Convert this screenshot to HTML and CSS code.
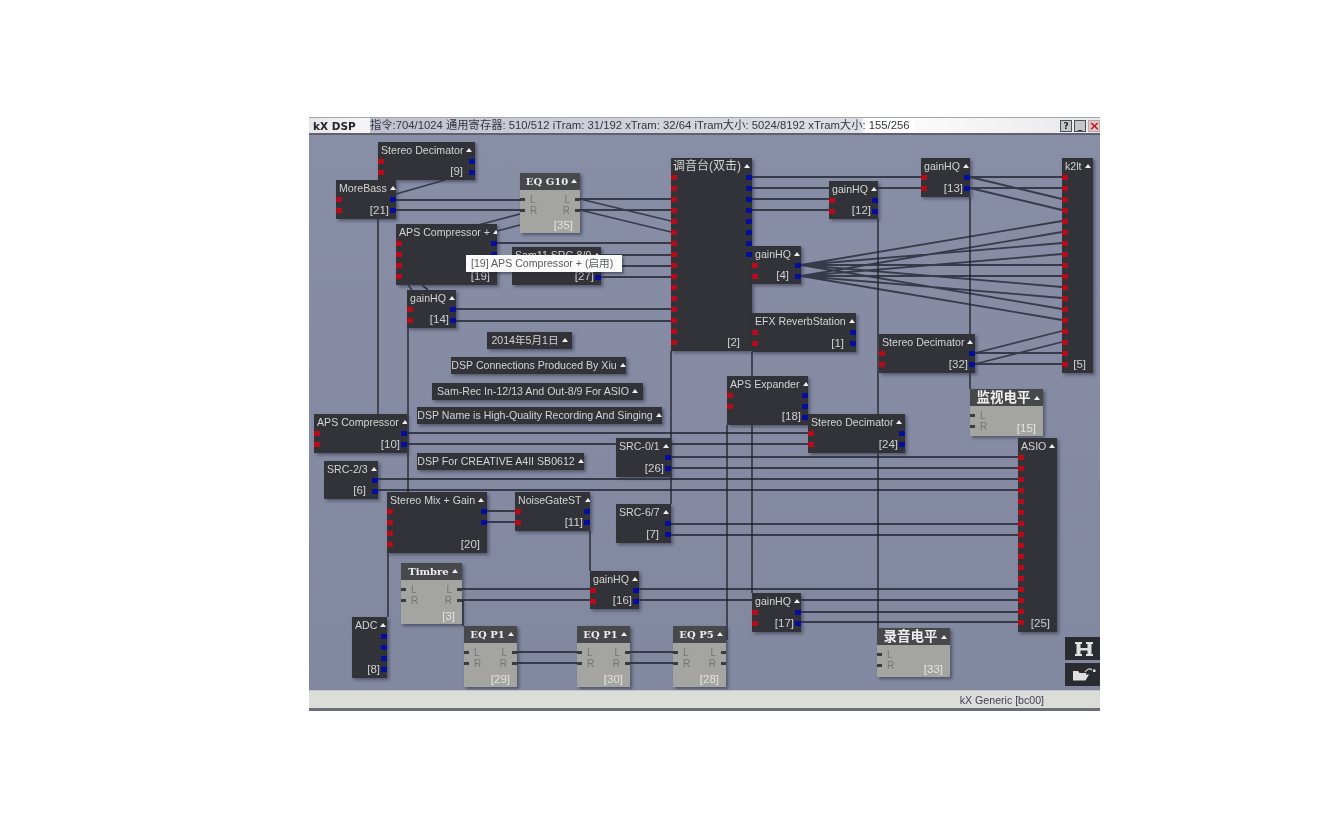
FILE: index.html
```html
<!DOCTYPE html>
<html lang="zh">
<head>
<meta charset="utf-8">
<title>kX DSP</title>
<link rel="stylesheet" href="styles.css">
</head>
<body>
<div class="win">
  <header class="titlebar">
    <b class="appname">kX DSP</b>
    <span class="stats">指令:704/1024 通用寄存器: 510/512 iTram: 31/192 xTram: 32/64 iTram大小: 5024/8192 xTram大小: 155/256</span>
    <span class="ctrls"><i class="c">?</i><i class="c">_</i><i class="c x">×</i></span>
  </header>
  <main class="canvas">
    <svg class="wires" viewBox="309 135 791 555">
      <path class="w" d="M396 200H520M396 210H520M580 199H671M580 210H671M580 199L671 221M580 210L671 232M478 225L520 214M497 231L520 225M396 194L445 180M497 243H671M601 255H671M601 266H671M601 277H671M456 309H671M456 321H671M407 433H808M407 444H808M671 457H1018M671 468H1018M378 479H1018M378 490H1018M671 524H1018M671 535H1018M462 589H590M462 600H590M639 589H1018M639 600H1018M801 612H1018M801 622H1018M487 511H515M487 522H515M517 652H577M517 663H577M630 652H673M630 663H673M752 177H921M752 188H921M752 199H829M752 210H829M970 177H1062M970 188H1062M970 177L1062 199M970 188L1062 210M801 265L1062 221M801 265L1062 243M801 265L1062 265M801 265L1062 287M801 265L1062 309M801 276L1062 232M801 276L1062 254M801 276L1062 276M801 276L1062 298M801 276L1062 320M975 353H1062M975 364H1062M975 353L1062 331M975 364L1062 342M408 285L412 290M422 285L428 290"/>
      <path class="v" d="M378 219V414M408 328V492M671 351V504M388 553V617M590 531V571M463 600V626M727 425V640M752 352V593M878 219V628M970 197V389"/>
    </svg>

    <section class="node n9"><h4>Stereo Decimator</h4><div class="b"><p class="ports"><i></i><i></i></p><p class="ports out"><i></i><i></i></p></div><span class="id far">[9]</span></section>
    <section class="node n21"><h4>MoreBass</h4><div class="b"><p class="ports"><i></i><i></i></p><p class="ports out"><i></i><i></i></p></div><span class="id">[21]</span></section>
    <section class="node grey n35"><h4>EQ G10</h4><div class="b"><p class="ports"><span><i></i>L</span><span><i></i>R</span></p><p class="ports out"><span><i></i>L</span><span><i></i>R</span></p></div><span class="id">[35]</span></section>
    <section class="node n19"><h4>APS Compressor +</h4><div class="b"><p class="ports"><i></i><i></i><i></i><i></i></p><p class="ports out"><i></i><i></i></p></div><span class="id">[19]</span></section>
    <section class="node n27"><h4>Sam11 SRC-8/9</h4><div class="b"><p class="ports"></p><p class="ports out"><i></i><i></i></p></div><span class="id">[27]</span></section>
    <section class="node n14"><h4>gainHQ</h4><div class="b"><p class="ports"><i></i><i></i></p><p class="ports out"><i></i><i></i></p></div><span class="id">[14]</span></section>
    <section class="node n2"><h4 class="cn">调音台(双击)</h4><div class="b"><p class="ports"><i></i><i></i><i></i><i></i><i></i><i></i><i></i><i></i><i></i><i></i><i></i><i></i><i></i><i></i><i></i><i></i></p><p class="ports out"><i></i><i></i><i></i><i></i><i></i><i></i><i></i><i></i></p></div><span class="id far">[2]</span></section>
    <section class="node n12"><h4>gainHQ</h4><div class="b"><p class="ports"><i></i><i></i></p><p class="ports out"><i></i><i></i></p></div><span class="id">[12]</span></section>
    <section class="node n13"><h4>gainHQ</h4><div class="b"><p class="ports"><i></i><i></i></p><p class="ports out"><i></i><i></i></p></div><span class="id">[13]</span></section>
    <section class="node n5"><h4>k2lt</h4><div class="b"><p class="ports"><i></i><i></i><i></i><i></i><i></i><i></i><i></i><i></i><i></i><i></i><i></i><i></i><i></i><i></i><i></i><i></i><i></i><i></i></p></div><span class="id">[5]</span></section>
    <section class="node n4"><h4>gainHQ</h4><div class="b"><p class="ports"><i></i><i></i></p><p class="ports out"><i></i><i></i></p></div><span class="id far">[4]</span></section>
    <section class="node n1"><h4>EFX ReverbStation</h4><div class="b"><p class="ports"><i></i><i></i></p><p class="ports out"><i></i><i></i></p></div><span class="id far">[1]</span></section>
    <section class="node n32"><h4>Stereo Decimator</h4><div class="b"><p class="ports"><i></i><i></i></p><p class="ports out"><i></i><i></i></p></div><span class="id">[32]</span></section>
    <section class="node n18"><h4>APS Expander</h4><div class="b"><p class="ports"><i></i><i></i></p><p class="ports out"><i></i><i></i><i></i></p></div><span class="id">[18]</span></section>
    <section class="node n24"><h4>Stereo Decimator</h4><div class="b"><p class="ports"><i></i><i></i></p><p class="ports out"><i></i><i></i></p></div><span class="id">[24]</span></section>
    <section class="node grey n15"><h4 class="cn">监视电平</h4><div class="b"><p class="ports"><span><i></i>L</span><span><i></i>R</span></p></div><span class="id">[15]</span></section>
    <section class="node n25"><h4>ASIO</h4><div class="b"><p class="ports"><i></i><i></i><i></i><i></i><i></i><i></i><i></i><i></i><i></i><i></i><i></i><i></i><i></i><i></i><i></i><i></i></p></div><span class="id">[25]</span></section>
    <section class="node n10"><h4>APS Compressor</h4><div class="b"><p class="ports"><i></i><i></i></p><p class="ports out"><i></i><i></i></p></div><span class="id">[10]</span></section>
    <section class="node n6"><h4>SRC-2/3</h4><div class="b"><p class="ports"></p><p class="ports out"><i></i><i></i></p></div><span class="id far">[6]</span></section>
    <section class="node n26"><h4>SRC-0/1</h4><div class="b"><p class="ports"></p><p class="ports out"><i></i><i></i></p></div><span class="id">[26]</span></section>

    <div class="note a"><h4>2014年5月1日</h4></div>
    <div class="note b1"><h4>DSP Connections Produced By Xiu</h4></div>
    <div class="note c1"><h4>Sam-Rec In-12/13 And Out-8/9 For ASIO</h4></div>
    <div class="note d"><h4>DSP Name is High-Quality Recording And Singing</h4></div>
    <div class="note e"><h4>DSP For CREATIVE A4II SB0612</h4></div>

    <section class="node n20"><h4>Stereo Mix + Gain</h4><div class="b"><p class="ports"><i></i><i></i><i></i><i></i></p><p class="ports out"><i></i><i></i></p></div><span class="id">[20]</span></section>
    <section class="node n11"><h4>NoiseGateST</h4><div class="b"><p class="ports"><i></i><i></i></p><p class="ports out"><i></i><i></i></p></div><span class="id">[11]</span></section>
    <section class="node n7"><h4>SRC-6/7</h4><div class="b"><p class="ports"></p><p class="ports out"><i></i><i></i></p></div><span class="id far">[7]</span></section>
    <section class="node grey n3"><h4>Timbre</h4><div class="b"><p class="ports"><span><i></i>L</span><span><i></i>R</span></p><p class="ports out"><span><i></i>L</span><span><i></i>R</span></p></div><span class="id">[3]</span></section>
    <section class="node n16"><h4>gainHQ</h4><div class="b"><p class="ports"><i></i><i></i></p><p class="ports out"><i></i><i></i></p></div><span class="id">[16]</span></section>
    <section class="node n17"><h4>gainHQ</h4><div class="b"><p class="ports"><i></i><i></i></p><p class="ports out"><i></i><i></i></p></div><span class="id">[17]</span></section>
    <section class="node n8"><h4>ADC</h4><div class="b"><p class="ports"></p><p class="ports out"><i></i><i></i><i></i><i></i></p></div><span class="id">[8]</span></section>
    <section class="node grey n29"><h4>EQ P1</h4><div class="b"><p class="ports"><span><i></i>L</span><span><i></i>R</span></p><p class="ports out"><span><i></i>L</span><span><i></i>R</span></p></div><span class="id">[29]</span></section>
    <section class="node grey n30"><h4>EQ P1</h4><div class="b"><p class="ports"><span><i></i>L</span><span><i></i>R</span></p><p class="ports out"><span><i></i>L</span><span><i></i>R</span></p></div><span class="id">[30]</span></section>
    <section class="node grey n28"><h4>EQ P5</h4><div class="b"><p class="ports"><span><i></i>L</span><span><i></i>R</span></p><p class="ports out"><span><i></i>L</span><span><i></i>R</span></p></div><span class="id">[28]</span></section>
    <section class="node grey n33"><h4 class="cn">录音电平</h4><div class="b"><p class="ports"><span><i></i>L</span><span><i></i>R</span></p></div><span class="id">[33]</span></section>

    <div class="tooltip">[19] APS Compressor + (启用)</div>

    <div class="tools">
      <button class="tool" aria-label="Save"><svg viewBox="0 0 35 23"><path class="ic" d="M10 5H17V7H15.500V11H22.500V7H21V5H28V7H26.500V17H28V19H21V17H22.500V13.500H15.500V17H17V19H10V17H11.500V7H10Z"/></svg></button>
      <button class="tool" aria-label="Open"><svg viewBox="0 0 35 23"><path class="ic" d="M8 8H13L14.500 10H21V11.500H24L20.500 17.500H8Z"/><path class="arr" d="M20 9Q24 4 27 7"/><path class="ic" d="M28 6.500H30.500V9H28Z"/></svg></button>
    </div>
  </main>
  <footer class="status"><span>kX Generic [bc00]</span></footer>
</div>
</body>
</html>
```

FILE: styles.css
```css
html, body { margin: 0; padding: 0; height: 100%; overflow: hidden; background: #fff; }
body { font-family: "Liberation Sans", "Noto Sans CJK SC", sans-serif; }

.win {
  width: 791px;
  height: 594px;
  margin: 117px 0 0 309px;
  display: flex;
  flex-direction: column;
  filter: blur(.6px);
  background: #6c6f7a;
}

.titlebar {
  height: 15px;
  flex: none;
  display: flex;
  align-items: center;
  background: linear-gradient(90deg, #e6e6e6 0, #f4f4f4 6%, #fff 72%, #e8e8ea 100%);
  border-top: 1px solid #a4a6ae;
  border-bottom: 2px solid #5f626d;
}
.appname {
  font: bold 10.5px "DejaVu Sans", sans-serif;
  color: #24242a;
  margin-left: 4px;
  width: 57px;
}
.stats {
  font-size: 11.3px;
  line-height: 15px;
  color: #33353f;
  white-space: nowrap;
  width: 545px;
  overflow: hidden;
  background: linear-gradient(90deg, #bfc2cd, #d2d4dc 55%, #dfe0e6 90%, #fff 91%);
}
.ctrls { margin-left: auto; display: flex; gap: 2px; }
.c {
  width: 12px;
  height: 12px;
  font: bold 9px/10px "DejaVu Sans", sans-serif;
  text-align: center;
  color: #222;
  background: #c4c6cc;
  border: 1.5px solid #4e5059;
  box-sizing: border-box;
}
.c.x { color: #c81420; border-color: #b9a4a8; background: #d9c8cc; font-size: 13px; }

.canvas {
  position: relative;
  flex: 1;
  background: linear-gradient(180deg, #898ea7, #82889f);
  overflow: hidden;
}
.wires { position: absolute; left: 0; top: 0; width: 791px; height: 555px; }
.w { fill: none; stroke: #363b4a; stroke-width: 1.8; }
.v { fill: none; stroke: #1c1f26; stroke-width: 1.3; }

.node, .note {
  position: absolute;
  background: #323338;
  box-shadow: 2px 2px 3px rgba(45, 50, 70, .55);
  color: #d4d4d4;
}
.node { display: flex; flex-direction: column; }
h4 {
  margin: 0;
  height: 17px;
  flex: none;
  padding-left: 3px;
  font-size: 10.6px;
  font-weight: 400;
  line-height: 17px;
  white-space: nowrap;
  overflow: hidden;
}
h4.cn { font-size: 12px; padding-left: 2px; }
h4::after {
  content: "";
  display: inline-block;
  margin-left: 3px;
  vertical-align: 2px;
  border-left: 3px solid transparent;
  border-right: 3px solid transparent;
  border-bottom: 4px solid #eee;
}
.b { display: flex; justify-content: space-between; flex: 1; }
.ports { margin: 0; display: flex; flex-direction: column; gap: 6px; padding-top: 0; margin-top: -.5px; }
.ports i { display: block; width: 6px; height: 5px; background: #b80a18; }
.ports.out i { background: #040d9e; }
.id { position: absolute; right: 7px; bottom: 2px; font-size: 11.5px; line-height: 14px; color: #d0d0d0; }
.id.far { right: 12px; }

.grey { background: #a4a5a1; box-shadow: 2px 2px 3px rgba(45, 50, 70, .6); }
.grey h4 { background: #47484b; color: #eee; font: bold 10px/17px "DejaVu Serif", "Noto Sans CJK SC", serif; padding-left: 5px; text-align: center; padding-right: 2px; }
.grey h4.cn { font-size: 13.500px; }
.grey .b { padding-top: 4px; }
.grey .ports { gap: 0; margin-top: 0; color: #757575; font-size: 10px; line-height: 11px; }
.grey .ports span { display: flex; align-items: center; gap: 5px; height: 11px; }
.grey .ports i { width: 5px; height: 3px; background: #3a3b3f; }
.grey .ports.out span { flex-direction: row-reverse; }
.grey .ports.out i { background: #3a3b3f; }
.grey .id { color: #e4e4e2; bottom: 1px; }

.note { text-align: center; height: 17px; }
.note h4 { padding: 0; }

.tooltip {
  position: absolute;
  left: 157px; top: 120px;
  width: 156px; height: 17px;
  box-sizing: border-box;
  padding-left: 5px;
  background: #fbfbfb;
  box-shadow: 2px 2px 2px rgba(40, 40, 50, .5);
  color: #5b5d66;
  font-size: 10.6px;
  line-height: 17px;
  white-space: nowrap;
}

.tools { position: absolute; right: 0; bottom: 4px; display: flex; flex-direction: column; gap: 3px; }
.tool { width: 35px; height: 23px; padding: 0; border: 0; background: #2a2b30; display: block; }
.tool svg { display: block; width: 35px; height: 23px; }
.ic { fill: #e0e0e0; }
.arr { fill: none; stroke: #d8d8d8; stroke-width: 1.1; }

.status {
  height: 17px;
  flex: none;
  display: flex;
  align-items: center;
  justify-content: flex-end;
  padding-right: 56px;
  margin-bottom: 3px;
  background: #dcdcd8;
  border-top: 1px solid #c4c5c8;
  font-size: 10.6px;
  color: #3c3f58;
}

.n9 { left: 69px; top: 7px; width: 97px; height: 38px; }
.n21 { left: 27px; top: 45px; width: 60px; height: 39px; }
.n35 { left: 211px; top: 38px; width: 60px; height: 60px; }
.n19 { left: 87px; top: 89px; width: 101px; height: 61px; }
.n27 { left: 203px; top: 112px; width: 89px; height: 38px; }
.n14 { left: 98px; top: 155px; width: 49px; height: 38px; }
.n2 { left: 362px; top: 23px; width: 81px; height: 193px; }
.n12 { left: 520px; top: 46px; width: 49px; height: 38px; }
.n13 { left: 612px; top: 23px; width: 49px; height: 39px; }
.n5 { left: 753px; top: 23px; width: 31px; height: 215px; }
.n4 { left: 443px; top: 111px; width: 49px; height: 38px; }
.n1 { left: 443px; top: 178px; width: 104px; height: 39px; }
.n32 { left: 570px; top: 199px; width: 96px; height: 39px; }
.n18 { left: 418px; top: 241px; width: 81px; height: 49px; }
.n24 { left: 499px; top: 279px; width: 97px; height: 39px; }
.n15 { left: 661px; top: 254px; width: 73px; height: 47px; }
.n25 { left: 709px; top: 303px; width: 39px; height: 194px; }
.n10 { left: 5px; top: 279px; width: 93px; height: 39px; }
.n6 { left: 15px; top: 326px; width: 54px; height: 38px; }
.n26 { left: 307px; top: 303px; width: 55px; height: 39px; }
.a { left: 178px; top: 197px; width: 85px; }
.b1 { left: 142px; top: 222px; width: 175px; }
.c1 { left: 123px; top: 248px; width: 211px; }
.d { left: 108px; top: 272px; width: 245px; }
.e { left: 108px; top: 318px; width: 167px; }
.n20 { left: 78px; top: 357px; width: 100px; height: 61px; }
.n11 { left: 206px; top: 357px; width: 75px; height: 39px; }
.n7 { left: 307px; top: 369px; width: 55px; height: 39px; }
.n3 { left: 92px; top: 428px; width: 61px; height: 61px; }
.n16 { left: 281px; top: 436px; width: 49px; height: 38px; }
.n17 { left: 443px; top: 458px; width: 49px; height: 39px; }
.n8 { left: 43px; top: 482px; width: 35px; height: 61px; }
.n29 { left: 155px; top: 491px; width: 53px; height: 61px; }
.n30 { left: 268px; top: 491px; width: 53px; height: 61px; }
.n28 { left: 364px; top: 491px; width: 53px; height: 61px; }
.n33 { left: 568px; top: 493px; width: 73px; height: 49px; }
```
